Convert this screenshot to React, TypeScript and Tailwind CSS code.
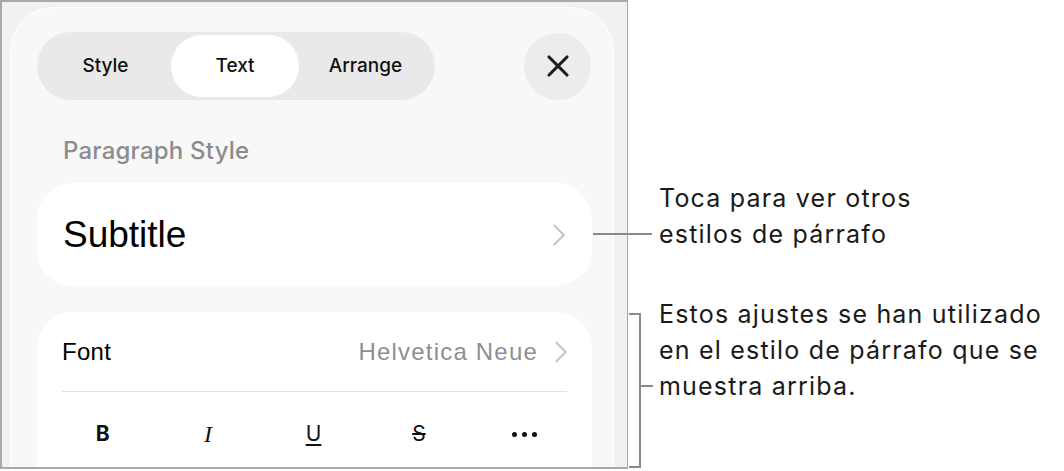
import { X, ChevronRight } from "lucide-react";

const TABS = ["Style", "Text", "Arrange"];
const SF = "font-['Inter','Noto_Sans',sans-serif]";
const HELV = "font-['Liberation_Sans','Arial',sans-serif]";

function Panel() {
  return (
    <div className="w-[628px] h-[469px] shrink-0 border-2 border-r border-b-2 border-[#a9a9a9] bg-[#f1f1f1] overflow-hidden pl-[8px] pr-[13px] pt-[5px]">
      <div className="h-[520px] rounded-[44px] bg-[#f8f8f7] border border-white pl-[26px] pr-[21px] pt-[24px]">
        {/* header */}
        <div className="flex items-center">
          <div className={`w-[398px] h-[68px] rounded-full bg-[#e9e9e9] p-[3px] grid grid-cols-[131px_128px_133px] ${SF}`}>
            {TABS.map((t) => (
              <div
                key={t}
                className={`flex items-center justify-center rounded-full text-[19px] font-medium text-[#111] ${
                  t === "Text" ? "bg-white" : ""
                }`}
              >
                {t}
              </div>
            ))}
          </div>
          <div className="ml-auto mr-[1px] w-[67px] h-[67px] rounded-full bg-[#ececec] flex items-center justify-center">
            <X size={36} strokeWidth={2.1} className="text-[#1c1c1e]" />
          </div>
        </div>

        <div className={`mt-[36px] pl-[26px] text-[24px] font-medium leading-[30px] tracking-[0.2px] text-[#8c8c90] ${SF}`}>
          Paragraph Style
        </div>

        {/* paragraph style card */}
        <div className="mt-[17px] h-[103px] rounded-[36px] bg-white flex items-center pl-[26px] pr-[26px]">
          <span className={`text-[37px] text-black ${HELV}`}>Subtitle</span>
          <ChevronRight size={38} strokeWidth={1.25} className="ml-auto -mr-[12px] text-[#c4c4c6]" />
        </div>

        {/* font card */}
        <div className="mt-[26px] h-[200px] rounded-[36px] bg-white px-[25px]">
          <div className="h-[80px] flex items-center border-b border-[#e2e2e4]">
            <span className={`text-[24px] tracking-[0.3px] text-black ${HELV}`}>Font</span>
            <span className={`ml-auto text-[24px] tracking-[1.2px] text-[#8e8e92] ${HELV}`}>Helvetica Neue</span>
            <ChevronRight size={38} strokeWidth={1.25} className="ml-[4px] -mr-[13px] text-[#c4c4c6]" />
          </div>
          <div className={`-ml-[12px] -mr-[10px] h-[84px] grid grid-cols-5 items-center text-center text-[21px] text-[#111] ${SF}`}>
            <span className="font-bold">B</span>
            <span className="italic font-['Liberation_Serif',serif] text-[24px]">I</span>
            <span className="underline underline-offset-[3px] decoration-[1.5px]">U</span>
            <span className="line-through decoration-[1.5px]">S</span>
            <span className="flex justify-center gap-[5px]">
              <span className="w-[5px] h-[5px] rounded-full bg-[#111]" />
              <span className="w-[5px] h-[5px] rounded-full bg-[#111]" />
              <span className="w-[5px] h-[5px] rounded-full bg-[#111]" />
            </span>
          </div>
        </div>
      </div>
    </div>
  );
}

export default function App() {
  return (
    <div className="relative w-[1064px] h-[471px] bg-white flex">
      <Panel />

      <div className={`pl-[31px] pt-[180px] text-[25px] leading-[36px] tracking-[1.2px] text-[#1a1a1a] ${SF}`}>
        <p>
          Toca para ver otros
          <br />
          estilos de párrafo
        </p>
        <p className="mt-[44px]">
          Estos ajustes se han utilizado
          <br />
          en el estilo de párrafo que se
          <br />
          muestra arriba.
        </p>
      </div>

      {/* leader line to paragraph style */}
      <div className="absolute left-[593px] top-[233px] w-[59px] h-[2px] bg-[#8a8a8a]" />

      {/* bracket */}
      <div className="absolute left-[629px] top-[313px] w-[12px] h-[155px] border-2 border-l-0 border-[#8a8a8a]" />
      <div className="absolute left-[641px] top-[385px] w-[12px] h-[2px] bg-[#8a8a8a]" />
    </div>
  );
}
